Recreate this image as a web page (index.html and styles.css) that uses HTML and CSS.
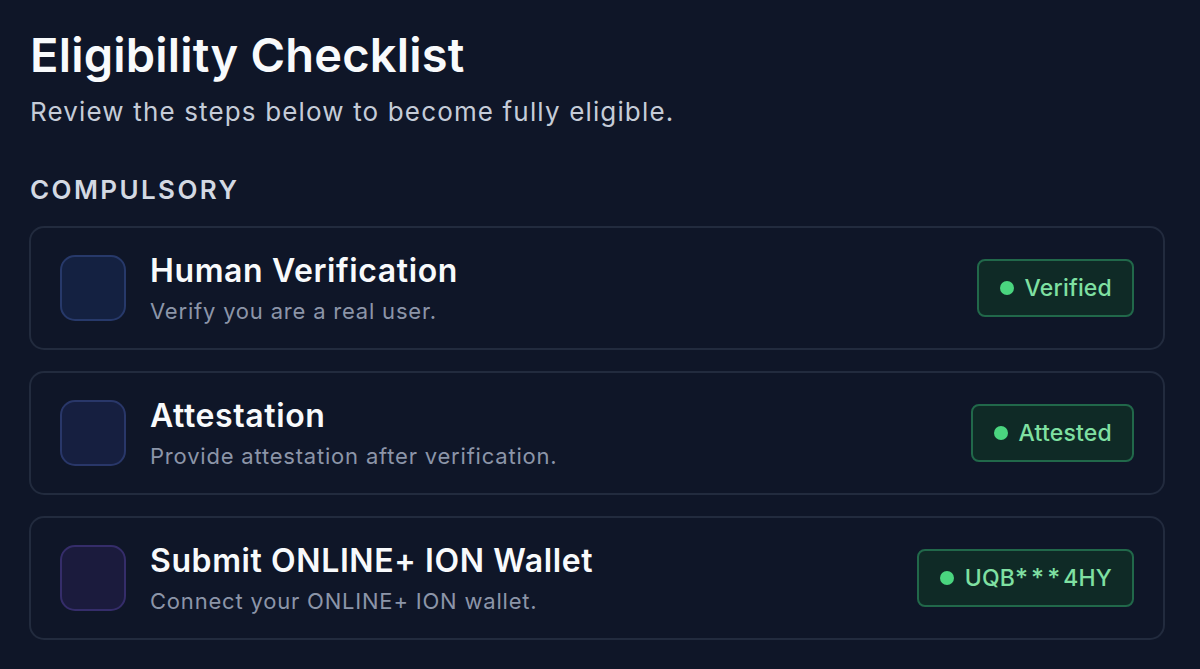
FILE: index.html
```html
<!DOCTYPE html>
<html lang="en">
<head>
<meta charset="utf-8">
<title>Eligibility Checklist</title>
<link rel="stylesheet" href="styles.css">
</head>
<body>
<main class="page">
  <h1 class="title">Eligibility Checklist</h1>
  <p class="lead">Review the steps below to become fully eligible.</p>
  <h2 class="section">COMPULSORY</h2>
  <div class="list">
    <div class="card">
      <div class="icon icon-blue"></div>
      <div class="text">
        <div class="card-title">Human Verification</div>
        <div class="card-sub">Verify you are a real user.</div>
      </div>
      <div class="badge"><span class="dot"></span>Verified</div>
    </div>
    <div class="card">
      <div class="icon icon-indigo"></div>
      <div class="text">
        <div class="card-title">Attestation</div>
        <div class="card-sub">Provide attestation after verification.</div>
      </div>
      <div class="badge"><span class="dot"></span>Attested</div>
    </div>
    <div class="card">
      <div class="icon icon-purple"></div>
      <div class="text">
        <div class="card-title">Submit ONLINE+ ION Wallet</div>
        <div class="card-sub">Connect your ONLINE+ ION wallet.</div>
      </div>
      <div class="badge"><span class="dot"></span>UQB<span class="mask">***</span>4HY</div>
    </div>
  </div>
</main>
</body>
</html>
```

FILE: styles.css
```css
* { box-sizing: border-box; }
html, body {
  margin: 0;
  padding: 0;
  background: #0f1628;
  font-family: Inter, "Noto Sans", sans-serif;
  color: #f8fafc;
}
.page {
  padding: 26px 35px 0 29px;
}
.title {
  margin: 0 0 0 1px;
  font-size: 47px;
  font-weight: 600;
  line-height: 58px;
  letter-spacing: 0.2px;
  color: #f8fafc;
}
.lead {
  margin: 12px 0 0 1px;
  font-size: 26px;
  line-height: 32px;
  letter-spacing: 1.15px;
  color: #c5ccd8;
}
.section {
  margin: 47px 0 0 1px;
  font-size: 26px;
  font-weight: 600;
  line-height: 30px;
  letter-spacing: 2.4px;
  color: #d3d9e3;
}
.list {
  margin-top: 21px;
  display: flex;
  flex-direction: column;
  gap: 21px;
}
.card {
  display: flex;
  align-items: center;
  height: 124px;
  padding: 0 29px;
  border: 2px solid #222b3e;
  border-radius: 15px;
  background: #0f1628;
}
.icon {
  flex: 0 0 auto;
  width: 66px;
  height: 66px;
  border-radius: 15px;
  border: 2px solid #27396a;
  background: #142141;
}
.icon-indigo {
  border-color: #293769;
  background: #161f40;
}
.icon-purple {
  border-color: #352d6a;
  background: #1b1b3d;
}
.text {
  flex: 1;
  margin-left: 24px;
  display: flex;
  flex-direction: column;
}
.card-title {
  font-size: 32px;
  font-weight: 600;
  line-height: 40px;
  letter-spacing: 0.6px;
  color: #f8fafc;
}
.card-sub {
  margin-top: 6px;
  font-size: 22px;
  line-height: 28px;
  letter-spacing: 0.8px;
  color: #8c95a8;
}
.badge {
  flex: 0 0 auto;
  display: flex;
  align-items: center;
  height: 58px;
  padding: 0 20px 0 21px;
  border: 2px solid #21684a;
  border-radius: 8px;
  background: #0f2a26;
  color: #7fe0a2;
  font-size: 23px;
  font-weight: 500;
  letter-spacing: 0.2px;
}
.dot {
  width: 14px;
  height: 14px;
  margin-right: 11px;
  border-radius: 50%;
  background: #4ad57f;
}
.mask {
  font-size: 25px;
  letter-spacing: 3px;
}
```
